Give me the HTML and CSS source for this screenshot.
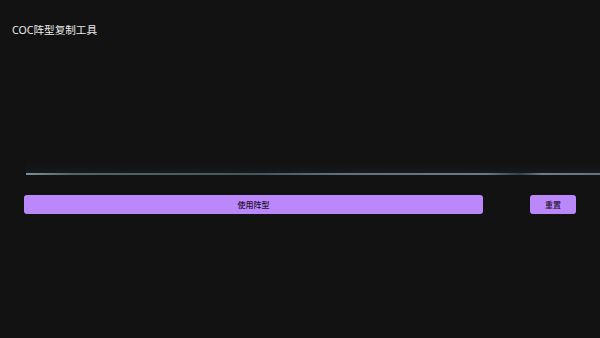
FILE: index.html
```html
<!DOCTYPE html>
<html lang="zh-CN">
  <head>
    <meta charset="UTF-8" />
    <meta name="viewport" content="width=device-width, initial-scale=1.0" />
    <title>COC阵型复制工具</title>
    <link rel="stylesheet" href="styles.css">
  </head>
  <body>
    <div class="app">
      <h1 class="title">COC阵型复制工具</h1>

      <div class="preview">
        <div class="preview-shade"></div>
        <div class="preview-line"></div>
      </div>

      <div class="actions">
        <button class="btn btn-main">使用阵型</button>
        <button class="btn btn-reset">重置</button>
      </div>
    </div>
  </body>
</html>
```

FILE: styles.css
```css
body {
  background-color: #121212;
  margin: 0;
  height: 338px;
  overflow: hidden;
  font-family: "Noto Sans", "Noto Sans CJK SC", sans-serif;
}

.app {
  display: flex;
  flex-direction: column;
}

.title {
  margin: 0;
  padding: 22px 0 0 12px;
  font-size: 10.6px;
  font-weight: normal;
  line-height: 16px;
  color: #ececec;
}

.preview {
  margin: 123px 0 0 26px;
  display: flex;
  flex-direction: column;
}

.preview-shade {
  height: 12px;
  background: linear-gradient(180deg, #121212 0%, #131516 60%, #171b1d 100%);
}

.preview-line {
  height: 2px;
  background: linear-gradient(90deg, #7e8f96 0%, #55656b 8%, #46565c 40%, #61737a 55%, #6a7c83 80%, #34424a 86%, #6d7f86 90%, #63757c 100%);
}

.actions {
  display: flex;
  justify-content: space-between;
  margin-top: 20px;
  padding: 0 24px;
}

.btn {
  border: none;
  border-radius: 3px;
  background-color: #bb88fb;
  color: #1e1030;
  font-family: "Noto Sans CJK SC", sans-serif;
  font-size: 8px;
  font-weight: 500;
  height: 19px;
  padding: 0;
  cursor: pointer;
}

.btn-main {
  width: 459px;
}

.btn-reset {
  width: 46px;
}
```
